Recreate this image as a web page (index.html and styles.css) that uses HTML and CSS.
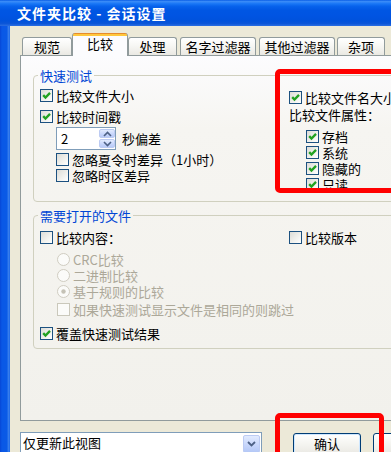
FILE: index.html
```html
<!DOCTYPE html>
<html lang="zh-CN">
<head>
<meta charset="utf-8">
<title>文件夹比较 - 会话设置</title>
<link rel="stylesheet" href="styles.css">
</head>
<body>
<div class="window">
  <div class="titlebar">文件夹比较 - 会话设置</div>
  <div class="client">
    <div class="tabs">
      <div class="tab tab-w50">规范</div>
      <div class="tab active">比较</div>
      <div class="tab tab-w49 gap3">处理</div>
      <div class="tab tab-w76 gap3">名字过滤器</div>
      <div class="tab tab-w76 gap2">其他过滤器</div>
      <div class="tab tab-w48">杂项</div>
    </div>
    <div class="panel">
      <fieldset class="group">
        <legend>快速测试</legend>
        <div class="cols">
          <div class="col-left pt5">
            <div class="row"><span class="cb"><svg viewBox="0 0 11 11" width="11" height="11"><path d="M2.2 5.1 L4.5 7.6 L9 2.9" fill="none" stroke="#21a121" stroke-width="2.3"/></svg></span><span>比较文件大小</span></div>
            <div class="row mt5"><span class="cb"><svg viewBox="0 0 11 11" width="11" height="11"><path d="M2.2 5.1 L4.5 7.6 L9 2.9" fill="none" stroke="#21a121" stroke-width="2.3"/></svg></span><span>比较时间戳</span></div>
            <div class="spin-row">
              <div class="spin">
                <span class="spin-value">2</span>
                <div class="spin-btns">
                  <div class="spin-btn"><svg viewBox="0 0 9 6" width="9" height="6"><path d="M1 5 L4.5 1.5 L8 5" fill="none" stroke="#4d6185" stroke-width="1.6"/></svg></div>
                  <div class="spin-btn"><svg viewBox="0 0 9 6" width="9" height="6"><path d="M1 1 L4.5 4.5 L8 1" fill="none" stroke="#4d6185" stroke-width="1.6"/></svg></div>
                </div>
              </div>
              <span class="spin-label">秒偏差</span>
            </div>
            <div class="row indent16 mt2"><span class="cb"></span><span>忽略夏令时差异（1小时）</span></div>
            <div class="row indent16"><span class="cb"></span><span>忽略时区差异</span></div>
          </div>
          <div class="col-right pt7">
            <div class="row"><span class="cb"><svg viewBox="0 0 11 11" width="11" height="11"><path d="M2.2 5.1 L4.5 7.6 L9 2.9" fill="none" stroke="#21a121" stroke-width="2.3"/></svg></span><span>比较文件名大小写</span></div>
            <div class="row mt1"><span>比较文件属性：</span></div>
            <div class="row indent17 mt6"><span class="cb"><svg viewBox="0 0 11 11" width="11" height="11"><path d="M2.2 5.1 L4.5 7.6 L9 2.9" fill="none" stroke="#21a121" stroke-width="2.3"/></svg></span><span>存档</span></div>
            <div class="row indent17"><span class="cb"><svg viewBox="0 0 11 11" width="11" height="11"><path d="M2.2 5.1 L4.5 7.6 L9 2.9" fill="none" stroke="#21a121" stroke-width="2.3"/></svg></span><span>系统</span></div>
            <div class="row indent17"><span class="cb"><svg viewBox="0 0 11 11" width="11" height="11"><path d="M2.2 5.1 L4.5 7.6 L9 2.9" fill="none" stroke="#21a121" stroke-width="2.3"/></svg></span><span>隐藏的</span></div>
            <div class="row indent17"><span class="cb"><svg viewBox="0 0 11 11" width="11" height="11"><path d="M2.2 5.1 L4.5 7.6 L9 2.9" fill="none" stroke="#21a121" stroke-width="2.3"/></svg></span><span>只读</span></div>
          </div>
        </div>
      </fieldset>

      <fieldset class="group group-2">
        <legend>需要打开的文件</legend>
        <div class="cols">
          <div class="col-left pt7">
            <div class="row"><span class="cb"></span><span>比较内容：</span></div>
            <div class="row indent17 mt6 disabled"><svg class="radio" viewBox="0 0 13 13" width="13" height="13"><circle cx="6.5" cy="6.5" r="6" fill="#fbfbf9" stroke="#cfccc0"/></svg><span>CRC比较</span></div>
            <div class="row indent17 disabled"><svg class="radio" viewBox="0 0 13 13" width="13" height="13"><circle cx="6.5" cy="6.5" r="6" fill="#fbfbf9" stroke="#cfccc0"/></svg><span>二进制比较</span></div>
            <div class="row indent17 disabled"><svg class="radio" viewBox="0 0 13 13" width="13" height="13"><circle cx="6.5" cy="6.5" r="6" fill="#fbfbf9" stroke="#cfccc0"/><circle cx="6.5" cy="6.5" r="2.2" fill="#c5c2b6"/></svg><span>基于规则的比较</span></div>
            <div class="row indent17 mt2 disabled"><span class="cb cb-disabled"></span><span>如果快速测试显示文件是相同的则跳过</span></div>
            <div class="row mt8"><span class="cb"><svg viewBox="0 0 11 11" width="11" height="11"><path d="M2.2 5.1 L4.5 7.6 L9 2.9" fill="none" stroke="#21a121" stroke-width="2.3"/></svg></span><span>覆盖快速测试结果</span></div>
          </div>
          <div class="col-right pt7">
            <div class="row"><span class="cb"></span><span>比较版本</span></div>
          </div>
        </div>
      </fieldset>
    </div>

    <div class="bottom">
      <div class="combo">
        <span class="combo-text">仅更新此视图</span>
        <div class="combo-drop"><svg viewBox="0 0 9 6" width="9" height="6"><path d="M1 1 L4.5 4.5 L8 1" fill="none" stroke="#4d6185" stroke-width="1.8"/></svg></div>
      </div>
      <div class="btn btn-default">确认</div>
      <div class="btn btn-next"></div>
    </div>
  </div>
</div>
<div class="annot annot-1"></div>
<div class="annot annot-2"></div>
</body>
</html>
```
FILE: styles.css
```css
html, body {
  margin: 0;
  padding: 0;
  width: 391px;
  height: 452px;
  overflow: hidden;
  background: #ece9d8;
}
body {
  font-family: "Noto Sans CJK SC", "Noto Sans", sans-serif;
  font-size: 13px;
  color: #000;
}
.window {
  width: 440px;
  height: 480px;
  display: flex;
  flex-direction: column;
}
.titlebar {
  flex: none;
  height: 26px;
  line-height: 26px;
  padding-left: 17px;
  color: #fff;
  font-weight: bold;
  font-size: 14px;
  letter-spacing: 1px;
  white-space: nowrap;
  background: linear-gradient(to bottom, #0a5ee6 0%, #3a8cf8 6%, #1a77f6 14%, #0762ec 24%, #0056e3 40%, #0054e2 60%, #0052dc 80%, #0a55d8 90%, #2a6ee2 100%);
}
.client {
  flex: 1;
  display: flex;
  flex-direction: column;
  padding: 7px 0 0 20px;
  background: linear-gradient(to right, #0747d6 0, #0a58e6 2px, #0a5ae6 7px, #2f78ec 8px, #3d82ee 9px, #0f5de4 10px, #ece9d8 10px);
}
.tabs {
  display: flex;
  align-items: flex-end;
  height: 22px;
  margin-left: 2px;
}
.tab {
  box-sizing: border-box;
  height: 18px;
  line-height: 17px;
  text-align: center;
  white-space: nowrap;
  border: 1px solid #919b9c;
  border-bottom: none;
  border-radius: 3px 3px 0 0;
  background: linear-gradient(to bottom, #ffffff 0%, #f7f7f4 45%, #eae9e3 100%);
}
.tab-w50 { width: 50px; }
.tab-w49 { width: 49px; }
.tab-w48 { width: 48px; }
.tab-w76 { width: 76px; }
.gap3 { margin-right: 3px; }
.gap2 { margin-right: 2px; }
.tab.active {
  position: relative;
  z-index: 1;
  width: 56px;
  height: 23px;
  margin-bottom: -1px;
  border-top: none;
  line-height: 21px;
  border-radius: 3px 3px 0 0;
  background: linear-gradient(to bottom, #e68b2c 0, #e68b2c 1px, #ffc73c 1px, #ffc73c 3px, #fcfcfe 3px);
}
.panel {
  box-sizing: border-box;
  height: 366px;
  border: 1px solid #919b9c;
  padding: 12px 0 0 12px;
  background: linear-gradient(to bottom, #fcfcfe 0%, #f6f5f1 20%, #f2f1ec 100%);
}
.group {
  margin: 0;
  width: 400px;
  min-width: 0;
  padding: 0 0 8px 6px;
  border: 1px solid #d0d0bf;
  border-radius: 4px;
}
.group-2 {
  margin-top: 6px;
  padding-bottom: 6px;
}
.group legend {
  padding: 0 2px;
  margin-left: -2px;
  line-height: 15px;
  color: #0046d5;
}
.cols {
  display: flex;
}
.col-left {
  width: 249px;
  flex: none;
}
.col-right {
  flex: 1;
}
.pt5 { padding-top: 5px; }
.pt7 { padding-top: 7px; }
.mt1 { margin-top: 1px; }
.mt2 { margin-top: 2px; }
.mt5 { margin-top: 5px; }
.mt6 { margin-top: 6px; }
.mt8 { margin-top: 8px; }
.indent16 { padding-left: 16px; }
.indent17 { padding-left: 17px; }
.row {
  display: flex;
  align-items: flex-start;
  gap: 3px;
  height: 16px;
  line-height: 16px;
  white-space: nowrap;
}
.cb {
  flex: none;
  box-sizing: border-box;
  width: 13px;
  height: 13px;
  margin-top: 1px;
  border: 1px solid #1c5180;
  background: linear-gradient(135deg, #dcdcd7 0%, #f0f0ec 55%, #ffffff 100%);
  display: flex;
}
.cb-disabled {
  border-color: #cac8bb;
  background: #fbfbf9;
}
.radio {
  flex: none;
  margin-top: 1px;
}
.disabled {
  color: #aca899;
}
.spin-row {
  display: flex;
  align-items: center;
  gap: 6px;
  height: 23px;
  margin-top: 2px;
  padding-left: 16px;
}
.spin {
  box-sizing: border-box;
  width: 60px;
  height: 23px;
  border: 1px solid #7f9db9;
  background: #fff;
  display: flex;
}
.spin-value {
  flex: 1;
  padding-left: 4px;
  line-height: 21px;
}
.spin-btns {
  width: 16px;
  display: flex;
  flex-direction: column;
  gap: 1px;
  margin: 1px 0;
}
.spin-btn {
  flex: 1;
  display: flex;
  align-items: center;
  justify-content: center;
  border-radius: 2px;
  border: 1px solid #bccbf3;
  background: linear-gradient(to bottom, #e2ebfe 0%, #c6d5fb 60%, #b9cbf7 100%);
}
.bottom {
  display: flex;
  align-items: flex-start;
  padding-top: 11px;
}
.combo {
  box-sizing: border-box;
  width: 252px;
  height: 22px;
  border: 1px solid #7f9db9;
  background: #fff;
  display: flex;
  align-items: flex-start;
}
.combo-text {
  flex: 1;
  padding-left: 2px;
  line-height: 20px;
  white-space: nowrap;
}
.combo-drop {
  box-sizing: border-box;
  width: 17px;
  height: 18px;
  margin: 2px 1px 0 0;
  border-radius: 2px;
  border: 1px solid #bccbf3;
  background: linear-gradient(to bottom, #e2ebfe 0%, #c6d5fb 60%, #b4c8f6 100%);
  display: flex;
  align-items: center;
  justify-content: center;
}
.btn {
  box-sizing: border-box;
  width: 70px;
  height: 23px;
  margin-top: 1px;
  border: 1px solid #003c74;
  border-radius: 3px;
  text-align: center;
  line-height: 20px;
  background: linear-gradient(to bottom, #ffffff 0%, #f4f4f0 50%, #ecebe6 85%, #d6d0c5 100%);
}
.btn-default {
  margin-left: 31px;
  box-shadow: inset 0 0 0 1px #cee7ff, inset 0 -1px 0 1px #adc4ef;
}
.btn-next {
  margin-left: 12px;
}
.annot {
  position: absolute;
  box-sizing: border-box;
  border: 5px solid #ff0000;
  border-radius: 5px;
}
.annot-1 {
  left: 275px;
  top: 69px;
  width: 140px;
  height: 124px;
}
.annot-2 {
  left: 275px;
  top: 413px;
  width: 109px;
  height: 60px;
}
```
